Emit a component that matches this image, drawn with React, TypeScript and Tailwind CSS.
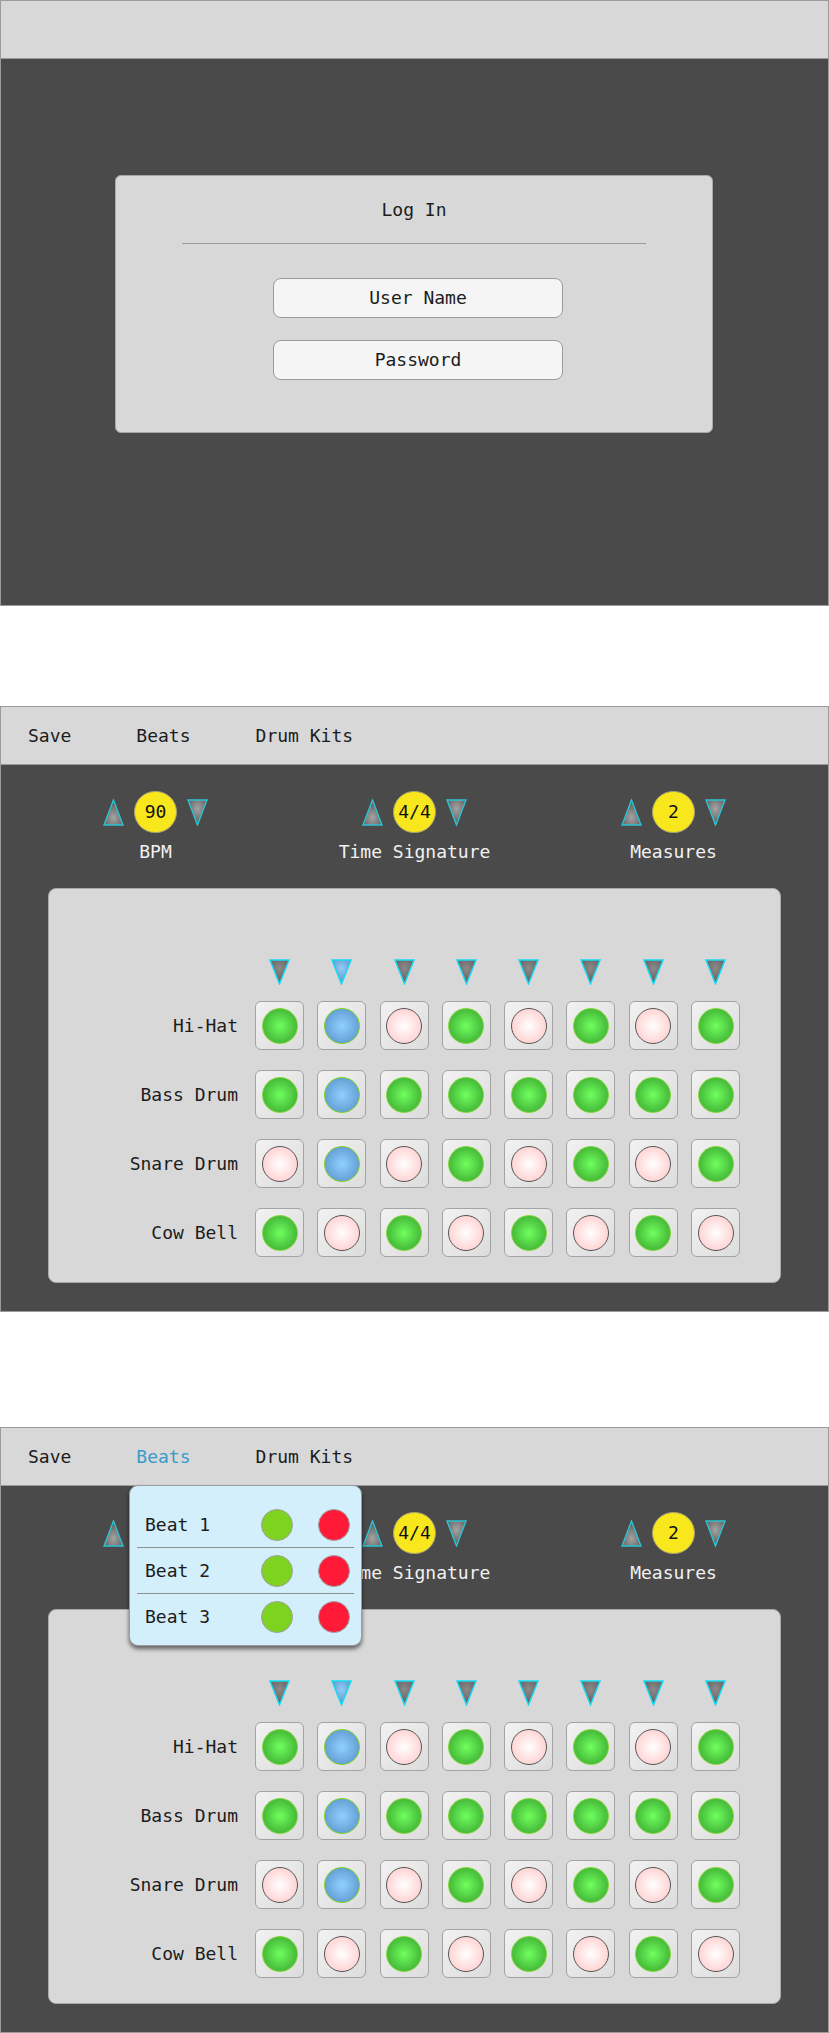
import React from "react";
import clsx from "clsx";

type CellState = "on" | "active" | "off";

const ROWS: { name: string; cells: CellState[] }[] = [
  { name: "Hi-Hat", cells: ["on", "active", "off", "on", "off", "on", "off", "on"] },
  { name: "Bass Drum", cells: ["on", "active", "on", "on", "on", "on", "on", "on"] },
  { name: "Snare Drum", cells: ["off", "active", "off", "on", "off", "on", "off", "on"] },
  { name: "Cow Bell", cells: ["on", "off", "on", "off", "on", "off", "on", "off"] },
];

const CONTROLS = [
  { value: "90", label: "BPM" },
  { value: "4/4", label: "Time Signature" },
  { value: "2", label: "Measures" },
];

const BEATS = ["Beat 1", "Beat 2", "Beat 3"];

const CELL_STYLE: Record<CellState, string> = {
  on: "border-[#84d63c] bg-[radial-gradient(circle,#70ff5e_0%,#4cc43f_60%,#3aa82f_100%)]",
  active: "border-[#7ed321] bg-[radial-gradient(circle,#8fd0ff_0%,#6ca8dc_60%,#5b8fc0_100%)]",
  off: "border-[#555555] bg-[radial-gradient(circle,#ffffff_0%,#ffdede_55%,#ffc6c6_100%)]",
};

const Triangle = (props: {
  dir: "up" | "down";
  light: string;
  dark: string;
  stroke: string;
  height?: number;
}) => {
  const { dir, light, dark, stroke, height = 27 } = props;
  const id = "g" + React.useId().replace(/[^a-zA-Z0-9]/g, "");
  const h = height - 1;
  const points = dir === "up" ? `10.5,1 20,${h} 1,${h}` : `1,1 20,1 10.5,${h}`;

  return (
    <svg width="21" height={height} viewBox={`0 0 21 ${height}`} className="block">
      <defs>
        <radialGradient id={id} cx="50%" cy={dir === "up" ? "70%" : "35%"} r="65%">
          <stop offset="0" stopColor={light} />
          <stop offset="1" stopColor={dark} />
        </radialGradient>
      </defs>
      <polygon points={points} fill={`url(#${id})`} stroke={stroke} strokeWidth="1.4" />
    </svg>
  );
};

const TopBar = ({ items, active }: { items: string[]; active?: string }) => (
  <div className="flex h-[58px] shrink-0 items-center gap-[65px] border-b border-[#9b9b9b] bg-[#d8d8d8] pl-[27px]">
    {items.map((item) => (
      <span
        key={item}
        className={clsx(item === active ? "text-[#3a9bc8]" : "text-[#1c1c1c]")}
      >
        {item}
      </span>
    ))}
  </div>
);

const Control = ({ value, label }: { value: string; label: string }) => (
  <div className="flex flex-col items-center">
    <div className="flex items-center gap-[10px]">
      <Triangle dir="up" light="#a4a4a4" dark="#585858" stroke="#2cc3d3" />
      <div className="flex h-[42px] w-[43px] items-center justify-center rounded-full border border-[#a8a070] bg-[#f8e71c] text-[#111]">
        {value}
      </div>
      <Triangle dir="down" light="#a4a4a4" dark="#585858" stroke="#2cc3d3" />
    </div>
    <div className="mt-[8px] text-[#f2f2f2]">{label}</div>
  </div>
);

const Cell = ({ state }: { state: CellState }) => (
  <div className="flex h-[49px] w-[49px] items-center justify-center rounded-[6px] border border-[#a3a3a3] bg-[linear-gradient(135deg,#f2f2f2,#dcdcdc)]">
    <div className={clsx("h-[36px] w-[36px] rounded-full border", CELL_STYLE[state])} />
  </div>
);

const Sequencer = () => (
  <div className="mx-[47px] mt-[25px] h-[395px] rounded-[8px] border border-[#a8a8a8] bg-[#d8d8d8] pt-[70px]">
    <div className="flex gap-[13.3px] pl-[206px]">
      {ROWS[0].cells.map((_, i) => (
        <div key={i} className="flex w-[49px] justify-center">
          {i === 1 ? (
            <Triangle dir="down" light="#92ccf6" dark="#5b8fc4" stroke="#14dcf5" height={26} />
          ) : (
            <Triangle dir="down" light="#908a8a" dark="#5c5c5c" stroke="#14dcf5" height={26} />
          )}
        </div>
      ))}
    </div>
    <div className="mt-[16px] flex flex-col gap-[20px]">
      {ROWS.map((row) => (
        <div key={row.name} className="flex items-center">
          <div className="w-[189px] text-right text-[#1c1c1c]">{row.name}</div>
          <div className="ml-[17px] flex gap-[13.3px]">
            {row.cells.map((c, i) => (
              <Cell key={i} state={c} />
            ))}
          </div>
        </div>
      ))}
    </div>
  </div>
);

const DrumBody = () => (
  <div className="flex flex-1 flex-col pt-[26px]">
    <div className="grid grid-cols-[259px_259px_259px] justify-center">
      {CONTROLS.map((c) => (
        <Control key={c.label} value={c.value} label={c.label} />
      ))}
    </div>
    <Sequencer />
  </div>
);

const BeatsMenu = () => (
  <div className="absolute top-[57px] left-[128px] w-[233px] rounded-[9px] border border-[#9b9b9b] bg-[#d2effb] pt-[16px] pb-[6px] shadow-[0_3px_4px_rgba(0,0,0,0.55)]">
    {BEATS.map((beat, i) => (
      <React.Fragment key={beat}>
        {i > 0 && <div className="mx-[7px] h-px bg-[#8e8e8e]" />}
        <div className="flex h-[45px] items-center pr-[11px] pl-[15px]">
          <span className="text-[#1c1c1c]">{beat}</span>
          <div className="ml-auto h-[32px] w-[32px] rounded-full border border-[#a0a0a0] bg-[#7ed321]" />
          <div className="ml-[25px] h-[32px] w-[32px] rounded-full border border-[#a0a0a0] bg-[#ff1a38]" />
        </div>
      </React.Fragment>
    ))}
  </div>
);

const Section = ({ className, children }: { className?: string; children: React.ReactNode }) => (
  <section
    className={clsx(
      "relative flex h-[606px] flex-col border border-[#9b9b9b] bg-[#4a4a4a]",
      className
    )}
  >
    {children}
  </section>
);

export default function App() {
  const menu = ["Save", "Beats", "Drum Kits"];

  return (
    <div className="w-[829px] bg-white font-['DejaVu_Sans_Mono',monospace] text-[18px] leading-[22px]">
      <Section>
        <div className="h-[58px] shrink-0 border-b border-[#9b9b9b] bg-[#d8d8d8]" />
        <div className="pt-[116px]">
          <div className="ml-[114px] h-[258px] w-[598px] rounded-[6px] border border-[#a8a8a8] bg-[#d8d8d8] pt-[23px]">
            <div className="text-center text-[#1c1c1c]">Log In</div>
            <div className="mx-[66px] mt-[22px] h-px bg-[#9b9b9b]" />
            <div className="mt-[34px] ml-[157px] flex h-[40px] w-[290px] items-center justify-center rounded-[8px] border border-[#9b9b9b] bg-[#f5f5f5] text-[#1c1c1c]">
              User Name
            </div>
            <div className="mt-[22px] ml-[157px] flex h-[40px] w-[290px] items-center justify-center rounded-[8px] border border-[#9b9b9b] bg-[#f5f5f5] text-[#1c1c1c]">
              Password
            </div>
          </div>
        </div>
      </Section>

      <Section className="mt-[100px]">
        <TopBar items={menu} />
        <DrumBody />
      </Section>

      <Section className="mt-[115px]">
        <TopBar items={menu} active="Beats" />
        <DrumBody />
        <BeatsMenu />
      </Section>
    </div>
  );
}
